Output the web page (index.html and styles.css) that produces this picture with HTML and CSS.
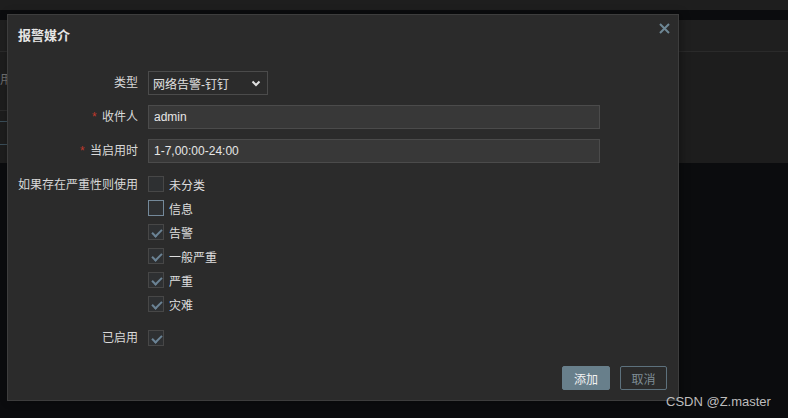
FILE: index.html
```html
<!DOCTYPE html>
<html lang="zh-CN">
<head>
    <meta charset="UTF-8">
    <title>报警媒介</title>
    <link rel="stylesheet" href="styles.css">
</head>
<body>
    <div class="topbar"></div>
    <div class="panel">
        <div class="panel-head"></div>
        <div class="side">
            <div class="side-row tall"><span class="cut-text">启用</span></div>
            <div class="side-row short"></div>
            <div class="side-row mid"></div>
        </div>
    </div>

    <div class="dialog">
        <div class="dialog-head">
            <h2>报警媒介</h2>
            <button class="close" type="button" aria-label="关闭">
                <svg width="11" height="11" viewBox="0 0 11 11"><path d="M1 1L10 10M10 1L1 10" stroke="#6e8795" stroke-width="2"/></svg>
            </button>
        </div>

        <form class="media-form">
            <label class="lbl" for="type">类型</label>
            <div class="field">
                <div class="select">
                    <span>网络告警-钉钉</span>
                    <svg width="10" height="7" viewBox="0 0 10 7"><path d="M1.5 1.5L5 5L8.5 1.5" stroke="#e0e0e0" stroke-width="2" fill="none"/></svg>
                </div>
            </div>

            <label class="lbl" for="sendto"><i>*</i> 收件人</label>
            <div class="field"><input id="sendto" type="text" value="admin"></div>

            <label class="lbl" for="period"><i>*</i> 当启用时</label>
            <div class="field"><input id="period" type="text" value="1-7,00:00-24:00"></div>

            <div class="lbl">如果存在严重性则使用</div>
            <div class="field checks">
                <div class="check"><span class="box"></span>未分类</div>
                <div class="check"><span class="box focus"></span>信息</div>
                <div class="check"><span class="box on"></span>告警</div>
                <div class="check"><span class="box on"></span>一般严重</div>
                <div class="check"><span class="box on"></span>严重</div>
                <div class="check"><span class="box on"></span>灾难</div>
            </div>

            <div class="lbl">已启用</div>
            <div class="field">
                <div class="check"><span class="box on"></span></div>
            </div>
        </form>

        <div class="dialog-foot">
            <button class="btn primary" type="button">添加</button>
            <button class="btn" type="button">取消</button>
        </div>
    </div>

    <div class="watermark">CSDN @Z.master</div>
</body>
</html>
```

FILE: styles.css
```css
body {
    margin: 0;
    background-color: #0b0c0e;
    font-family: "Liberation Sans", "Noto Sans CJK SC", sans-serif;
    font-size: 12px;
    color: #d9d9d9;
    height: 418px;
    overflow: hidden;
}
.topbar {
    height: 10px;
    background-color: #1e1e1e;
}
.panel {
    margin-top: 10px;
    height: 143px;
    background-color: #1d1d1d;
}
.panel-head {
    height: 31px;
    border-bottom: 1px solid #2a2a2a;
    background-color: #1f1f1f;
}
.side {
    width: 20px;
}
.side-row {
    border-bottom: 1px solid #2a2a2a;
}
.side-row.tall {
    height: 59px;
    padding-top: 20px;
    box-sizing: border-box;
    line-height: 16px;
}
.side-row.short {
    height: 10px;
    border-bottom-color: #3a4d58;
}
.side-row.mid {
    height: 22px;
    border-bottom-color: #3a4d58;
}
.cut-text {
    margin-left: -12px;
    color: #6f6f6f;
}

/* dialog */
.dialog {
    position: absolute;
    left: 7px;
    top: 14px;
    width: 670px;
    height: 385px;
    background-color: #2b2b2b;
    border: 1px solid #3d3d3d;
    box-shadow: 2px 0 8px rgba(0,0,0,0.35);
    display: flex;
    flex-direction: column;
}
.dialog-head {
    display: flex;
    justify-content: space-between;
    align-items: flex-start;
    padding: 13px 8px 0 10px;
    height: 30px;
}
.dialog-head h2 {
    margin: 0;
    font-size: 13px;
    line-height: 16px;
    font-weight: bold;
    color: #e6e6e6;
}
.close {
    background: none;
    border: none;
    padding: 0;
    margin-top: -5px;
    width: 11px;
    height: 11px;
    cursor: pointer;
}
.close svg {
    display: block;
}

.media-form {
    margin-top: 13px;
    display: grid;
    grid-template-columns: 130px 1fr;
    column-gap: 10px;
    row-gap: 10px;
    align-items: start;
}
.lbl {
    text-align: right;
    line-height: 24px;
    color: #d9d9d9;
    white-space: nowrap;
}
.lbl i {
    font-style: normal;
    color: #c0392b;
    margin-right: 2px;
}
.field input {
    display: block;
    width: 452px;
    height: 24px;
    box-sizing: border-box;
    background-color: #383838;
    border: 1px solid #4b4b4b;
    color: #e6e6e6;
    font-family: "Liberation Sans", "Noto Sans CJK SC", sans-serif;
    font-size: 12px;
    padding: 0 5px;
    outline: none;
}
.select {
    width: 120px;
    height: 24px;
    box-sizing: border-box;
    border: 1px solid #4b4b4b;
    background-color: #2b2b2b;
    display: flex;
    align-items: center;
    justify-content: space-between;
    padding: 0 6px 0 4px;
    color: #e0e0e0;
}

.checks {
    margin-top: -1px;
}
.check {
    height: 24px;
    display: flex;
    align-items: center;
    gap: 5px;
    color: #dedede;
}
.box {
    width: 16px;
    height: 16px;
    box-sizing: border-box;
    border: 1px solid #474747;
    background-color: #2e3032;
    position: relative;
}
.box.focus {
    border-color: #74899a;
}
.box.on::after {
    content: "";
    position: absolute;
    left: 5px;
    top: 2px;
    width: 4px;
    height: 8px;
    border: solid #6b8395;
    border-width: 0 2px 2px 0;
    transform: rotate(45deg);
}

.dialog-foot {
    margin-top: auto;
    display: flex;
    justify-content: flex-end;
    gap: 10px;
    padding: 0 11px 10px 0;
}
.btn {
    height: 24px;
    box-sizing: border-box;
    padding: 0 10px;
    min-width: 47px;
    font-family: "Liberation Sans", "Noto Sans CJK SC", sans-serif;
    font-size: 12px;
    background-color: transparent;
    border: 1px solid #5d717d;
    color: #7f8d96;
    border-radius: 2px;
    cursor: pointer;
}
.btn.primary {
    width: 48px;
    background-color: #687f8b;
    border-color: #687f8b;
    color: #f2f2f2;
}

.watermark {
    position: absolute;
    left: 666px;
    top: 394px;
    font-size: 13px;
    color: #bdbdbd;
}
```
